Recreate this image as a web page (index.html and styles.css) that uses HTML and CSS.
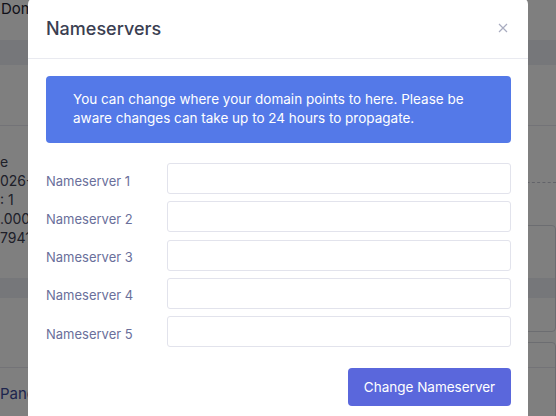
FILE: index.html
```html
<!DOCTYPE html>
<html lang="en">
  <head>
    <meta charset="UTF-8">
    <meta name="viewport" content="width=device-width, initial-scale=1.0">
    <title>Nameservers</title>
    <link rel="stylesheet" href="styles.css">
  </head>
  <body>
    <div id="page">
      <div class="crumbs">Dom</div>
      <div class="band"></div>
      <div class="panel">
        <div class="panel-head"></div>
        <div class="panel-body">
          <div class="info">
            <p>e</p>
            <p>026-0</p>
            <p>: 1</p>
            <p>.000,</p>
            <p>79415</p>
          </div>
          <div class="cards">
            <div class="card"></div>
            <div class="card"></div>
          </div>
        </div>
      </div>
      <div class="band short"></div>
      <div class="panel-foot">Pane</div>
    </div>

    <div id="backdrop"></div>

    <div id="modal">
      <div class="modal-header">
        <h2>Nameservers</h2>
        <svg class="close" width="10" height="10" viewBox="0 0 10 10">
          <path d="M1 1L9 9M9 1L1 9" stroke="#a9acc0" stroke-width="1.2" fill="none"/>
        </svg>
      </div>
      <div class="modal-body">
        <div class="alert">
          You can change where your domain points to here. Please be aware changes can take up to 24 hours to propagate.
        </div>
        <form class="ns-form">
          <label for="ns1">Nameserver 1</label>
          <input type="text" id="ns1">

          <label for="ns2">Nameserver 2</label>
          <input type="text" id="ns2">

          <label for="ns3">Nameserver 3</label>
          <input type="text" id="ns3">

          <label for="ns4">Nameserver 4</label>
          <input type="text" id="ns4">

          <label for="ns5">Nameserver 5</label>
          <input type="text" id="ns5">
        </form>
        <div class="actions">
          <button type="button">Change Nameserver</button>
        </div>
      </div>
    </div>
  </body>
</html>
```

FILE: styles.css
```css
body {
    margin: 0;
    font-family: Inter, "Open Sans", sans-serif;
    background-color: #ffffff;
    overflow: hidden;
    height: 416px;
}
#page {
    color: #1f2333;
}
.crumbs {
    height: 40px;
    padding: 0 1px;
    font-size: 15px;
    line-height: 18px;
    white-space: nowrap;
}
.band {
    height: 25px;
    background-color: #eceef4;
}
.band.short {
    height: 20px;
}
.panel-head {
    height: 60px;
    border-bottom: 1px solid #e6e7ee;
}
.panel-body {
    display: flex;
    justify-content: space-between;
    padding-top: 26px;
    height: 126px;
}
.info p {
    margin: 0;
    font-size: 14px;
    line-height: 19px;
    color: #3c4052;
    white-space: nowrap;
}
.cards {
    width: 40px;
    border-top: 1px dashed #c5c7d2;
    margin-top: 30px;
    padding-top: 42px;
}
.card {
    height: 105px;
    border: 1px solid #d8dae3;
    border-radius: 4px;
    margin-bottom: 10px;
}
.panel-foot {
    margin-top: 69px;
    padding-top: 16px;
    border-top: 1px solid #e6e7ee;
    font-size: 15px;
    color: #3c4a9c;
}
#backdrop {
    position: fixed;
    inset: 0;
    background-color: rgba(0, 0, 0, 0.5);
}
#modal {
    position: fixed;
    top: -2px;
    left: 28px;
    width: 500px;
    height: 440px;
    background-color: #ffffff;
    border-radius: 6px;
    box-sizing: border-box;
}
.modal-header {
    display: flex;
    align-items: center;
    justify-content: space-between;
    height: 61px;
    box-sizing: border-box;
    padding: 0 18px;
    border-bottom: 1px solid #e9eaf0;
}
.modal-header h2 {
    margin: 0;
    font-size: 18px;
    font-weight: 500;
    color: #3a3e51;
}
.close {
    margin-right: 2px;
}
.modal-body {
    padding: 17px 17px 0 18px;
}
.alert {
    background-color: #5479e8;
    color: #ffffff;
    border-radius: 4px;
    padding: 14px 26px 15px 27px;
    font-size: 13.5px;
    line-height: 19px;
}
.ns-form {
    display: grid;
    grid-template-columns: 121px 1fr;
    row-gap: 7.3px;
    align-items: center;
    margin-top: 20px;
}
.ns-form label {
    font-size: 13px;
    color: #6a6f9b;
    padding-top: 4px;
}
.ns-form input {
    height: 31px;
    box-sizing: border-box;
    border: 1px solid #e2e3ec;
    border-radius: 3px;
    padding: 5px 10px;
    font-family: inherit;
}
.actions {
    display: flex;
    justify-content: flex-end;
    margin-top: 21px;
}
.actions button {
    height: 38px;
    width: 163px;
    background-color: #5a67dc;
    color: #ffffff;
    border: none;
    border-radius: 4px;
    font-family: inherit;
    font-size: 13.5px;
}
```
